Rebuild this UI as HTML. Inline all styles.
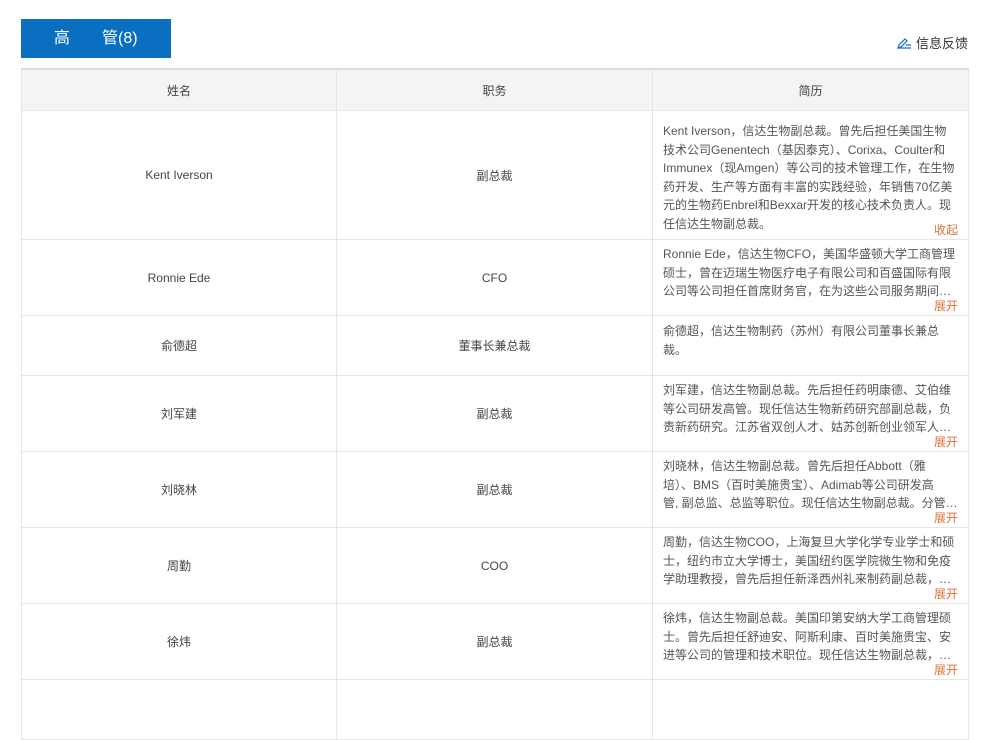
<!DOCTYPE html>
<html><head><meta charset="utf-8"><style>
body{margin:0;background:#fff;font-family:"Liberation Sans","Noto Sans CJK SC",sans-serif;color:#333;width:989px;height:685px;overflow:hidden;position:relative}
.btn{position:absolute;left:21px;top:19px;width:150px;height:39px;background:#0b6fc1;color:#fff;font-size:16px;line-height:39px}
.btn span{position:absolute;top:0}
.fb{position:absolute;right:21px;top:33px;font-size:13px;color:#333}
table{position:absolute;left:21px;top:68px;border-collapse:collapse;width:947px;table-layout:fixed;font-size:12px}
td,th{border:1px solid #e5e5e5;text-align:center;color:#444}
th{background:#f4f4f4;font-weight:normal;height:40px;border-top:2px solid #dcdcdc;padding:0}
td.b{text-align:left;vertical-align:top;padding:5px 8px 0 10px;line-height:18.5px;white-space:nowrap;color:#555;position:relative}
.m{position:absolute;right:10px;bottom:1px;line-height:16px;color:#e2703a}
</style></head><body>
<div class="btn"><span style="left:33px">高</span><span style="left:81px">管(8)</span></div>
<div class="fb"><svg width="15" height="12" viewBox="0 0 15 12" style="vertical-align:-1px;margin-right:4px"><path d="M1 11 L2 8 L8 2 L10 4 L4 10 Z" fill="none" stroke="#1a6fc0" stroke-width="1.2"/><path d="M1 11 H14 M9 8 H14" stroke="#1a6fc0" stroke-width="1.2"/></svg>信息反馈</div>
<table>
<colgroup><col style="width:315px"><col style="width:316px"><col style="width:316px"></colgroup>
<tr><th>姓名</th><th>职务</th><th>简历</th></tr>
<tr style="height:129px"><td>Kent Iverson</td><td>副总裁</td><td class="b" style="padding-top:11px">Kent Iverson，信达生物副总裁。曾先后担任美国生物<br>技术公司Genentech（基因泰克）、Corixa、Coulter和<br>Immunex（现Amgen）等公司的技术管理工作，在生物<br>药开发、生产等方面有丰富的实践经验，年销售70亿美<br>元的生物药Enbrel和Bexxar开发的核心技术负责人。现<br>任信达生物副总裁。<span class="m">收起</span></td></tr>
<tr style="height:76px"><td>Ronnie Ede</td><td>CFO</td><td class="b">Ronnie Ede，信达生物CFO，美国华盛顿大学工商管理<br>硕士，曾在迈瑞生物医疗电子有限公司和百盛国际有限<br>公司等公司担任首席财务官，在为这些公司服务期间…<span class="m">展开</span></td></tr>
<tr style="height:60px"><td>俞德超</td><td>董事长兼总裁</td><td class="b" style="padding-top:6px">俞德超，信达生物制药（苏州）有限公司董事长兼总<br>裁。</td></tr>
<tr style="height:76px"><td>刘军建</td><td>副总裁</td><td class="b">刘军建，信达生物副总裁。先后担任药明康德、艾伯维<br>等公司研发高管。现任信达生物新药研究部副总裁，负<br>责新药研究。江苏省双创人才、姑苏创新创业领军人…<span class="m">展开</span></td></tr>
<tr style="height:76px"><td>刘晓林</td><td>副总裁</td><td class="b">刘晓林，信达生物副总裁。曾先后担任Abbott（雅<br>培）、BMS（百时美施贵宝）、Adimab等公司研发高<br>管, 副总监、总监等职位。现任信达生物副总裁。分管…<span class="m">展开</span></td></tr>
<tr style="height:76px"><td>周勤</td><td>COO</td><td class="b">周勤，信达生物COO，上海复旦大学化学专业学士和硕<br>士，纽约市立大学博士，美国纽约医学院微生物和免疫<br>学助理教授，曾先后担任新泽西州礼来制药副总裁，…<span class="m">展开</span></td></tr>
<tr style="height:76px"><td>徐炜</td><td>副总裁</td><td class="b">徐炜，信达生物副总裁。美国印第安纳大学工商管理硕<br>士。曾先后担任舒迪安、阿斯利康、百时美施贵宝、安<br>进等公司的管理和技术职位。现任信达生物副总裁，…<span class="m">展开</span></td></tr>
<tr style="height:60px"><td></td><td></td><td class="b"></td></tr>
</table>
</body></html>
